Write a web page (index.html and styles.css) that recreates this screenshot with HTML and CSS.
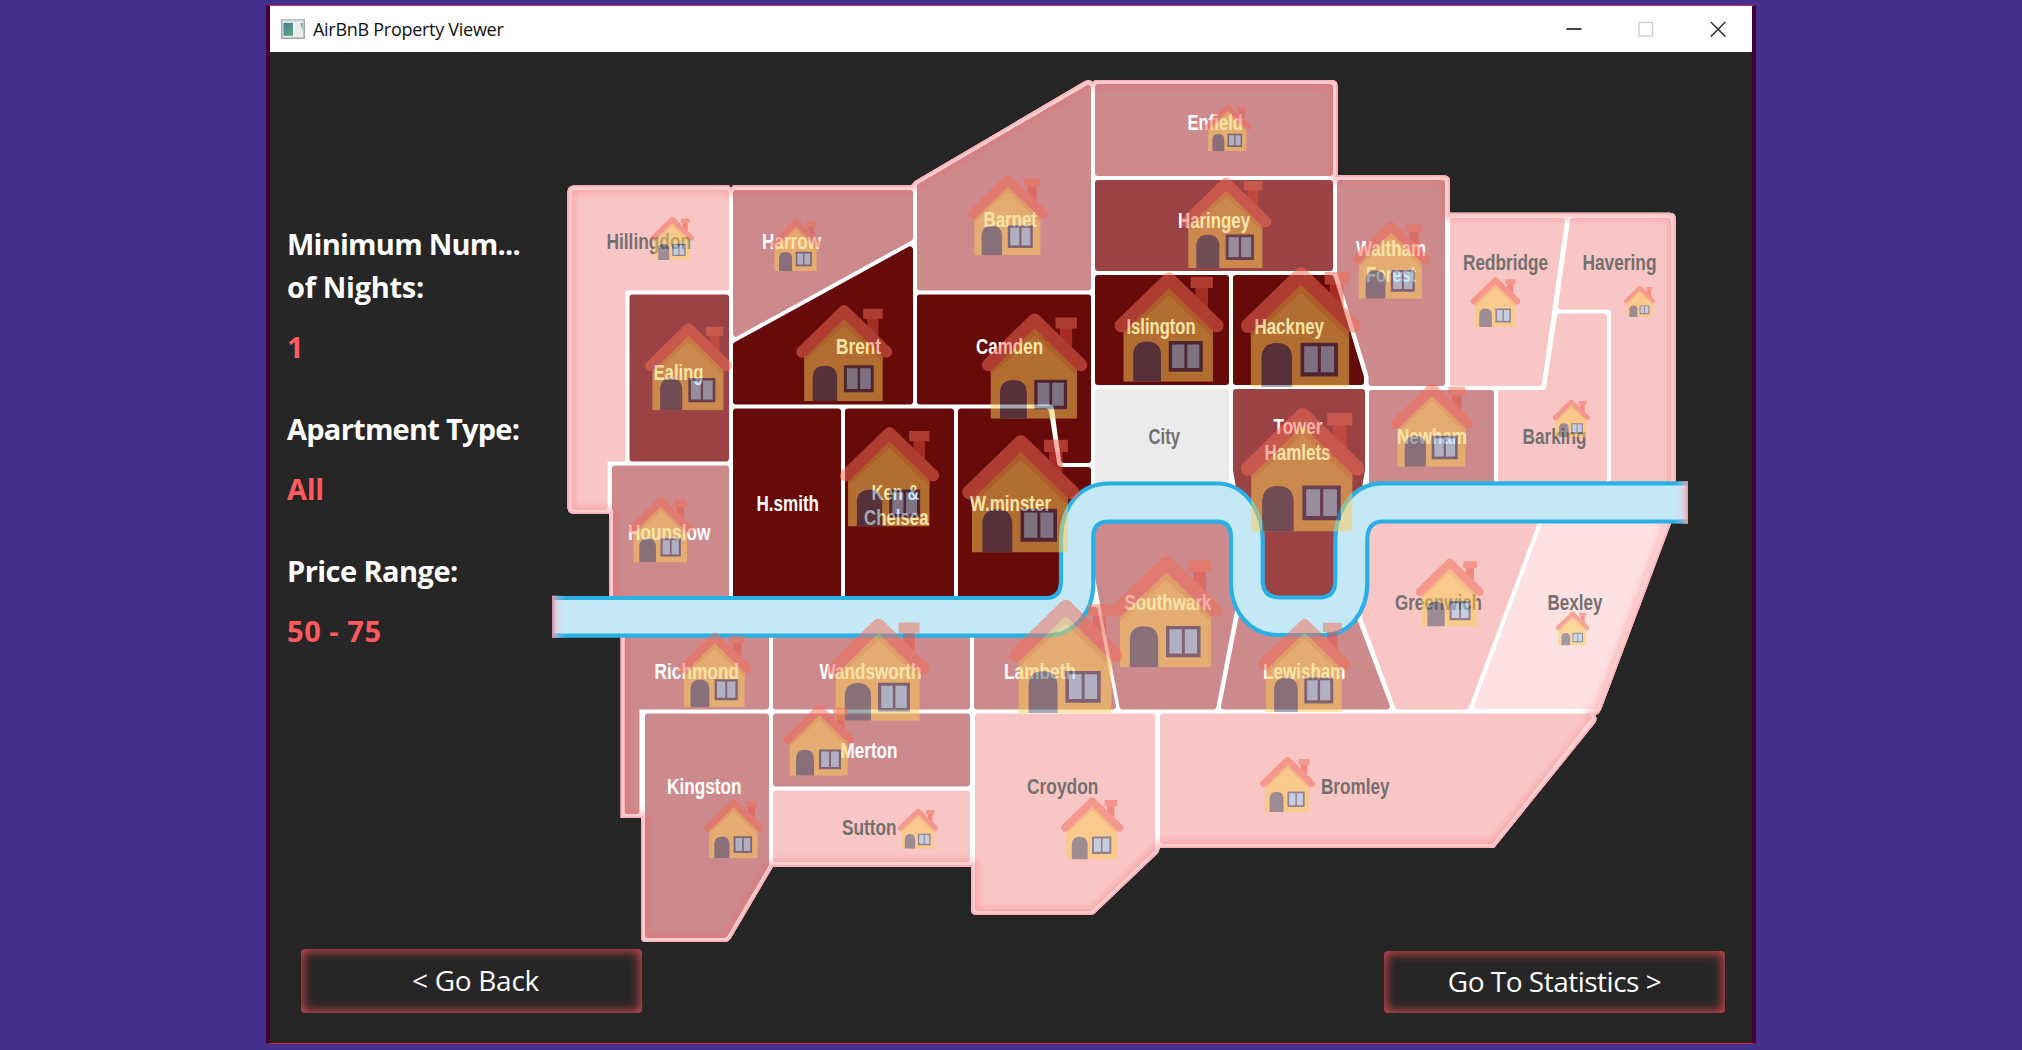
FILE: index.html
```html
<!DOCTYPE html>
<html lang="en">
<head>
<meta charset="utf-8">
<title>AirBnB Property Viewer</title>
<link rel="stylesheet" href="styles.css">
</head>
<body>
<div class="window">
  <header class="titlebar">
    <svg class="app-icon" width="24" height="20" viewBox="0 0 24 20">
      <rect x=".8" y=".8" width="22.4" height="18.4" fill="#f1f1f3" stroke="#a3a8ac" stroke-width="1.6"/>
      <path d="M1 1.4H23" stroke="#c5cdd2" stroke-width="2"/>
      <rect x="2.5" y="3.8" width="9.5" height="13" fill="url(#app-pane)"/>
      <rect x="13.5" y="3.8" width="8" height="13" fill="#e9ebee"/>
      <path d="M19.5 4h2v8z" fill="#5a9c88"/>
      <defs><linearGradient id="app-pane" x1="0" y1="0" x2="1" y2="1"><stop offset="0" stop-color="#4a7fa6"/><stop offset="1" stop-color="#57a772"/></linearGradient></defs>
    </svg>
    <h1 class="title">AirBnB Property Viewer</h1>
    <div class="controls">
      <svg width="16" height="16" viewBox="0 0 16 16"><path d="M.5 8H15.5" stroke="#444" stroke-width="2"/></svg>
      <svg width="16" height="16" viewBox="0 0 16 16"><rect x="1" y="1.5" width="13.5" height="13.5" fill="none" stroke="#ccc" stroke-width="1.3"/></svg>
      <svg width="16" height="16" viewBox="0 0 16 16"><path d="M.8 1L15.4 15.6M15.4 1L.8 15.6" stroke="#333" stroke-width="1.5"/></svg>
    </div>
  </header>
  <main class="content">
    <aside class="filters">
      <section><h2><span class="tight">Minimum Num...</span><br><span class="snug">of Nights:</span></h2><p>1</p></section>
      <section><h2 class="tight">Apartment Type:</h2><p class="snug">All</p></section>
      <section><h2 class="close">Price Range:</h2><p class="wide">50 - 75</p></section>
    </aside>
    <svg class="map" width="1136" height="866" viewBox="552 78 1136 866">
      <defs>
        <path id="outline" d="M567.5 192Q567.5 185.5 574 185.5H729L731 188L733 185.5H911L915 181L1085 81Q1090 79 1093 82L1095 80H1332Q1337.5 80 1337.5 86V175.5H1444Q1450 175.5 1450 181V212.7H1670Q1675.7 212.7 1675.7 219V521H1672L1602 707Q1600 714 1595 715Q1598 719 1595 723L1494 848H1160L1158 853L1094 914Q1092 915 1090 915H977Q971 915 971 909V866.7H773L731 938Q728 942 725 942H645Q641 942 641 937V818H620.7V600H609V514H575Q567.5 514 567.5 507Z"/>
        <clipPath id="inside"><use href="#outline"/></clipPath>
        <filter id="glow" x="-5%" y="-5%" width="110%" height="110%"><feGaussianBlur stdDeviation="3.5"/></filter>
        <linearGradient id="fade-l"><stop offset="0" stop-color="#e890a0" stop-opacity=".9"/><stop offset=".4" stop-color="#f0c0cc" stop-opacity=".35"/><stop offset="1" stop-color="#f0c0cc" stop-opacity="0"/></linearGradient>
        <linearGradient id="fade-r"><stop offset="0" stop-color="#f0c0cc" stop-opacity="0"/><stop offset=".6" stop-color="#f0c0cc" stop-opacity=".35"/><stop offset="1" stop-color="#e890a0" stop-opacity=".9"/></linearGradient>
        <symbol id="house" viewBox="0 0 100 100">
          <path d="M74 10H85.5V42H74Z" fill="#e84e41"/>
          <path d="M69.7 4.3H90V14.6H69.7Z" fill="#f36c56"/>
          <path d="M8.5 50L50 12L90 50V100H8.5Z" fill="#fcce58"/>
          <path d="M8.5 52L50 13L90 52V59.5L50 21.5L8.5 59.5Z" fill="#f3b04a"/>
          <path d="M6.2 49L50 6.4L93.8 49" fill="none" stroke="#f36c56" stroke-width="12" stroke-linejoin="round" stroke-linecap="round"/>
          <path d="M17.3 100V75Q18 63.3 30 63.3T42.7 75V100Z" fill="#495666"/>
          <path d="M49.7 63H80.7V91H49.7Z" fill="#383f56"/>
          <path d="M52.8 66H64V87.6H52.8ZM66.6 66H77.6V87.6H66.6Z" fill="#95d5f6"/>
        </symbol>
      </defs>

      <use href="#outline" fill="#fff"/>
      <g class="area light">
        <path d="M575 193H726V287.5H622.5V458.5H604.7V507H575Z"/>
        <path d="M1453 221H1562L1539 383H1453Z"/>
        <path d="M1573 221H1668V480H1614V312Q1614 306.5 1608 306.5H1561Z"/>
        <path d="M1560 316.5H1604V490H1501V393H1543Q1548 393 1549 388Z"/>
        <path d="M1365 500H1544L1534 525L1466 706.5H1398L1365 617Z"/>
        <path d="M776 793.5H967V859H776Z"/>
        <path d="M978 716.5H1152.5V849L1090 908H978Z"/>
        <path d="M1163 716.5H1589L1491 841H1163Z"/>
      </g>
      <path class="area pale" d="M1554 500H1671L1595 706H1477Z"/>
      <g class="area mid">
        <path d="M736 193H910V238L736 333.5Z"/>
        <path d="M920 186L1088 88V287.5H920Z"/>
        <path d="M1098 87H1330V173H1098Z"/>
        <path d="M1340 183H1442V383H1371.5V376L1340 272Z"/>
        <path d="M1372 393H1491V500H1372Z"/>
        <path d="M615 468.5H726V610H615Z"/>
        <path d="M627 610H766V706.5H636.5V811H627Z"/>
        <path d="M776 610H967V706.5H776Z"/>
        <path d="M977 610H1094.5L1113 706.5H977Z"/>
        <path d="M1098 515H1236V590L1213.5 706.5H1122.5L1098 577Z"/>
        <path d="M1247 590H1343L1387 706.5H1224Z"/>
        <path d="M776 716.5H967V783.5H776Z"/>
        <path d="M648 716.5H766V865L725 935H648Z"/>
      </g>
      <g class="area strong">
        <path d="M632.5 297.5H726V458.5H632.5Z"/>
        <path d="M1098 183H1330V268H1098Z"/>
        <path d="M1236 392H1362V470L1340 600H1258L1236 470Z"/>
      </g>
      <g class="area dark">
        <path d="M736 345L910 249.4V401.5H736Z"/>
        <path d="M920 297.5H1088V460H1064L1057 408Q1056 401.5 1050 401.5H920Z"/>
        <path d="M736 411.5H838V600H736Z"/>
        <path d="M848 411.5H951V600H848Z"/>
        <path d="M961 411.5H1046L1054 463Q1055 470 1062 470H1088V540L1060 600H961Z"/>
        <path d="M1098 278H1226V382H1098Z"/>
        <path d="M1236 278H1331L1361 377V382H1236Z"/>
      </g>
      <path class="area city" d="M1098 392H1226V500H1098Z"/>

      <g clip-path="url(#inside)" fill="none">
        <use href="#outline" stroke="#ff5a5f" stroke-width="13" opacity=".33" filter="url(#glow)"/>
        <use href="#outline" stroke="#ffced0" stroke-width="8"/>
        <use href="#outline" stroke="#ffb0b4" stroke-width="3.2"/>
      </g>

      <path class="river-bed" d="M552 598H1046Q1061 598 1061 581V540C1061 506 1080 483.5 1109 483.5H1217C1244 483.5 1262.7 510 1262.7 540V581Q1263 597.5 1280 597.5H1320Q1335.3 597.5 1335.3 580V540C1335.3 508 1355 483.4 1382 483.4H1690V521.5H1383Q1367.3 521.5 1367.3 540V583C1367.3 612 1349 635 1325 635H1277C1251 635 1231 612 1231 583V537Q1231 521.7 1217 521.7H1109Q1093.3 521.7 1093.3 537V583C1093.3 612 1075 635.7 1046 635.7H552Z"/>
      <rect x="552" y="595.5" width="14" height="42.5" fill="url(#fade-l)"/>
      <rect x="1674" y="481" width="14" height="43" fill="url(#fade-r)"/>

      <g class="name on-dark">
        <text x="762" y="248.5" textLength="59" lengthAdjust="spacingAndGlyphs">Harrow</text>
        <text x="653.5" y="379.5" textLength="50" lengthAdjust="spacingAndGlyphs">Ealing</text>
        <text x="836" y="354.3" textLength="45" lengthAdjust="spacingAndGlyphs">Brent</text>
        <text x="983.5" y="226.5" textLength="53.5" lengthAdjust="spacingAndGlyphs">Barnet</text>
        <text x="1187.5" y="129.5" textLength="55.5" lengthAdjust="spacingAndGlyphs">Enfield</text>
        <text x="1178" y="227.5" textLength="72" lengthAdjust="spacingAndGlyphs">Haringey</text>
        <text x="1126.5" y="333.5" textLength="69" lengthAdjust="spacingAndGlyphs">Islington</text>
        <text x="976" y="353.5" textLength="67" lengthAdjust="spacingAndGlyphs">Camden</text>
        <text x="1254.5" y="333.5" textLength="69.5" lengthAdjust="spacingAndGlyphs">Hackney</text>
        <text x="1356" y="256" textLength="70" lengthAdjust="spacingAndGlyphs">Waltham</text>
        <text x="1366" y="281.5" textLength="50" lengthAdjust="spacingAndGlyphs">Forest</text>
        <text x="1397" y="443.5" textLength="70" lengthAdjust="spacingAndGlyphs">Newham</text>
        <text x="1273.5" y="434" textLength="49" lengthAdjust="spacingAndGlyphs">Tower</text>
        <text x="1264.5" y="459.5" textLength="66" lengthAdjust="spacingAndGlyphs">Hamlets</text>
        <text x="756.5" y="511" textLength="62.5" lengthAdjust="spacingAndGlyphs">H.smith</text>
        <text x="871.5" y="499.5" textLength="48" lengthAdjust="spacingAndGlyphs">Ken &amp;</text>
        <text x="864" y="525" textLength="64.5" lengthAdjust="spacingAndGlyphs">Chelsea</text>
        <text x="628" y="539.5" textLength="82.5" lengthAdjust="spacingAndGlyphs">Hounslow</text>
        <text x="654.5" y="679" textLength="84.5" lengthAdjust="spacingAndGlyphs">Richmond</text>
        <text x="819.5" y="679" textLength="102" lengthAdjust="spacingAndGlyphs">Wandsworth</text>
        <text x="970" y="511" textLength="81" lengthAdjust="spacingAndGlyphs">W.minster</text>
        <text x="1124.5" y="610" textLength="87" lengthAdjust="spacingAndGlyphs">Southwark</text>
        <text x="1004" y="679" textLength="72" lengthAdjust="spacingAndGlyphs">Lambeth</text>
        <text x="1263" y="679" textLength="82.5" lengthAdjust="spacingAndGlyphs">Lewisham</text>
        <text x="840.5" y="758" textLength="57" lengthAdjust="spacingAndGlyphs">Merton</text>
        <text x="667" y="794" textLength="74.5" lengthAdjust="spacingAndGlyphs">Kingston</text>
      </g>
      <g class="name on-light">
        <text x="606.5" y="248.5" textLength="84.5" lengthAdjust="spacingAndGlyphs">Hillingdon</text>
        <text x="1463" y="269.5" textLength="85" lengthAdjust="spacingAndGlyphs">Redbridge</text>
        <text x="1582.5" y="269.5" textLength="74" lengthAdjust="spacingAndGlyphs">Havering</text>
        <text x="1522.5" y="443.5" textLength="64" lengthAdjust="spacingAndGlyphs">Barking</text>
        <text x="1148.5" y="443.5" textLength="31.5" lengthAdjust="spacingAndGlyphs">City</text>
        <text x="1395" y="610" textLength="87" lengthAdjust="spacingAndGlyphs">Greenwich</text>
        <text x="1547.5" y="610" textLength="55" lengthAdjust="spacingAndGlyphs">Bexley</text>
        <text x="1321" y="794" textLength="68.5" lengthAdjust="spacingAndGlyphs">Bromley</text>
        <text x="842" y="834.5" textLength="54.5" lengthAdjust="spacingAndGlyphs">Sutton</text>
        <text x="1027" y="794" textLength="71.5" lengthAdjust="spacingAndGlyphs">Croydon</text>
      </g>

      <g class="houses">
        <use href="#house" x="650.7" y="216.7" width="43.3" height="43.3"/>
        <use href="#house" x="770" y="219.2" width="51.8" height="51.8"/>
        <use href="#house" x="645" y="323" width="87.2" height="87.2"/>
        <use href="#house" x="796" y="304.7" width="96.3" height="96.3"/>
        <use href="#house" x="967.6" y="174.5" width="80.8" height="80.8"/>
        <use href="#house" x="1204.3" y="104.3" width="46.8" height="46.8"/>
        <use href="#house" x="1180.5" y="177.2" width="91" height="91"/>
        <use href="#house" x="1114.2" y="272" width="109.7" height="109.7"/>
        <use href="#house" x="981.7" y="313" width="105.8" height="105.8"/>
        <use href="#house" x="1240.6" y="266.8" width="120.5" height="120.5"/>
        <use href="#house" x="1352.3" y="221.2" width="77.5" height="77.5"/>
        <use href="#house" x="1470.6" y="277" width="49.9" height="49.9"/>
        <use href="#house" x="1624" y="285.6" width="31.4" height="31.4"/>
        <use href="#house" x="1552.6" y="399.5" width="37.5" height="37.5"/>
        <use href="#house" x="1390.2" y="383.2" width="83.6" height="83.6"/>
        <use href="#house" x="1240.7" y="407.5" width="124" height="124"/>
        <use href="#house" x="628" y="497" width="65.5" height="65.5"/>
        <use href="#house" x="839.6" y="426.6" width="99.8" height="99.8"/>
        <use href="#house" x="677.6" y="632.4" width="74.5" height="74.5"/>
        <use href="#house" x="827" y="618" width="102.8" height="102.8"/>
        <use href="#house" x="962" y="434.7" width="117.7" height="117.7"/>
        <use href="#house" x="1110.5" y="555.7" width="111.6" height="111.6"/>
        <use href="#house" x="1008.9" y="599.3" width="113.7" height="113.7"/>
        <use href="#house" x="1258" y="618.7" width="93.2" height="93.2"/>
        <use href="#house" x="1415.6" y="558.3" width="68.2" height="68.2"/>
        <use href="#house" x="1555.6" y="611.4" width="34" height="34"/>
        <use href="#house" x="1260" y="756.7" width="55.3" height="55.3"/>
        <use href="#house" x="783.7" y="704.7" width="71" height="71"/>
        <use href="#house" x="704" y="798.7" width="59.6" height="59.6"/>
        <use href="#house" x="897.8" y="808.3" width="40.5" height="40.5"/>
        <use href="#house" x="1061" y="797.2" width="62.4" height="62.4"/>
      </g>
    </svg>
  </main>
  <footer class="actions">
    <button class="nav back">&lt; Go Back</button>
    <button class="nav stats">Go To Statistics &gt;</button>
  </footer>
</div>
</body>
</html>
```
FILE: styles.css
```css
* { box-sizing: border-box; }

body {
  margin: 0;
  height: 1050px;
  padding: 5px 266px 6px;
  background: #44318d;
  font-family: "Open Sans", "Noto Sans", sans-serif;
  overflow: hidden;
}

.window {
  width: 1490px;
  height: 1039px;
  display: flex;
  flex-direction: column;
  background: #262626;
  border: 1px solid #e0263f;
  border-width: 1px 4px;
  border-left-color: #430038;
  border-right-color: #430038;
}

.titlebar {
  flex: none;
  height: 46px;
  display: flex;
  align-items: center;
  padding: 0 26px 0 11px;
  background: #fff;
}

.app-icon { margin-right: 8px; }

.title {
  flex: 1;
  margin: 0;
  font-size: 18px;
  font-weight: 400;
  line-height: 46px;
  letter-spacing: -0.28px;
  color: #111;
}

.controls { display: flex; gap: 56px; }

.content {
  flex: none;
  height: 890px;
  display: flex;
  padding: 26px 0 0 17px;
}

.filters {
  width: 265px;
  display: flex;
  flex-direction: column;
  gap: 39.5px;
  padding-top: 144px;
  font-size: 29px;
  line-height: 43px;
  white-space: nowrap;
}

.filters section { display: flex; flex-direction: column; gap: 16.5px; }
.filters h2, .filters p { margin: 0; font-size: inherit; font-weight: 700; }
.filters h2 { color: #fff; }
.filters p { color: #ff5a5f; }

.tight { letter-spacing: -0.75px; }
.close { letter-spacing: -0.55px; }
.snug { letter-spacing: -0.3px; }
.wide { letter-spacing: 0.55px; }

.map { flex: none; display: block; }

.area { stroke-width: 6; stroke-linejoin: round; }
.light { fill: #f9c6c6; stroke: #f9c6c6; }
.pale { fill: #fee1e1; stroke: #fee1e1; }
.mid { fill: #cd8a8d; stroke: #cd8a8d; }
.strong { fill: #9b4245; stroke: #9b4245; }
.dark { fill: #660a0a; stroke: #660a0a; }
.city { fill: #ebebeb; stroke: #ebebeb; }

.river-bed { fill: #c5e8f7; stroke: #2bb0e6; stroke-width: 4.2; }

.name { font: 700 22px "Liberation Sans", Arial, sans-serif; }
.on-dark { fill: #fff; }
.on-light { fill: #747070; }

.houses use { opacity: .51; }

.actions {
  flex: 1;
  display: flex;
  justify-content: space-between;
  align-items: flex-start;
  padding: 7px 27px 0 31px;
}

.nav {
  width: 341px;
  height: 64px;
  padding: 0;
  border: 0;
  border-radius: 4px;
  background: #262626;
  box-shadow: inset 0 0 11px 2px #d0484d;
  color: #fff;
  font: 400 28px/62px "Open Sans", "Noto Sans", sans-serif;
}

.back { padding: 0 0 2px 8px; letter-spacing: -0.3px; }
.stats { height: 62px; margin-top: 2px; padding-bottom: 2px; line-height: 60px; letter-spacing: -0.5px; }
```
